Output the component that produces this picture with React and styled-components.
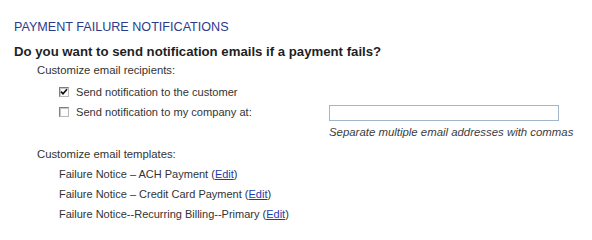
import React from "react";
import styled, { createGlobalStyle } from "styled-components";

const Global = createGlobalStyle`
  html, body { margin: 0; padding: 0; background: #ffffff; }
  body { font-family: Arial, "Liberation Sans", sans-serif; color: #333333; }
`;

const Page = styled.div`
  padding: 17px 0 0 14px;
  width: 592px;
  height: 239px;
  box-sizing: border-box;
  overflow: hidden;
`;

const Title = styled.div`
  font-size: 12.6px;
  line-height: 21px;
  color: #2b3b8a;
  text-transform: uppercase;
`;

const Question = styled.div`
  margin-top: 5px;
  font-size: 13.2px;
  font-weight: bold;
  line-height: 18px;
  color: #1f1f1f;
`;

const Section = styled.div`
  padding-left: 23px;
  margin-top: ${(p) => p.$top || 0}px;
`;

const SectionLabel = styled.div`
  font-size: 11.3px;
  line-height: ${(p) => p.$lh || 20}px;
  color: #333333;
`;

const List = styled.div`
  padding-left: 22px;
  margin-top: ${(p) => p.$top || 0}px;
`;

const OptionGrid = styled.div`
  display: grid;
  grid-template-columns: 270px 230px;
  grid-auto-rows: 20px;
  align-items: center;
`;

const Option = styled.label`
  display: flex;
  align-items: center;
  gap: 7px;
  font-size: 11.1px;
  line-height: 20px;
  color: #333333;
`;

const Box = styled.span`
  width: 10px;
  height: 10px;
  box-sizing: border-box;
  border: 1px solid #7f7f7f;
  border-right-color: #b8b8b8;
  border-bottom-color: #b8b8b8;
  box-shadow: inset 1px 1px 0 #c8c8c8;
  background: #fdfdfd;
  display: inline-flex;
  align-items: center;
  justify-content: center;
`;

const TextField = styled.div`
  width: 230px;
  height: 16px;
  box-sizing: border-box;
  border: 1px solid #a2b6cb;
  background: #ffffff;
  margin-top: 1px;
`;

const Hint = styled.div`
  grid-column: 2 / 3;
  font-size: 11.4px;
  font-style: italic;
  line-height: 21px;
  color: #3c3c3c;
  white-space: nowrap;
`;

const Template = styled.div`
  font-size: 11px;
  line-height: ${(p) => p.$lh || 20}px;
  color: #333333;
  white-space: nowrap;
`;

const Link = styled.a`
  color: #1c3cae;
  text-decoration: underline;
  cursor: pointer;
`;

function CheckBox({ checked }) {
  return (
    <Box>
      {checked && (
        <svg width="8" height="8" viewBox="0 0 8 8">
          <path d="M1 3.6 L3 5.8 L7 1.2" fill="none" stroke="#111" strokeWidth="1.7" />
        </svg>
      )}
    </Box>
  );
}

export default function App() {
  return (
    <>
      <Global />
      <Page>
        <Title>Payment Failure Notifications</Title>
        <Question>Do you want to send notification emails if a payment fails?</Question>
        <Section>
          <SectionLabel $lh={18}>Customize email recipients:</SectionLabel>
          <List $top={3}>
            <Option>
              <CheckBox checked />
              Send notification to the customer
            </Option>
            <OptionGrid>
              <Option>
                <CheckBox />
                Send notification to my company at:
              </Option>
              <TextField />
              <Hint>Separate multiple email addresses with commas</Hint>
            </OptionGrid>
          </List>
        </Section>
        <Section $top={2}>
          <SectionLabel>Customize email templates:</SectionLabel>
          <List>
            <Template>
              Failure Notice – ACH Payment (<Link>Edit</Link>)
            </Template>
            <Template>
              Failure Notice – Credit Card Payment (<Link>Edit</Link>)
            </Template>
            <Template>
              Failure Notice--Recurring Billing--Primary (<Link>Edit</Link>)
            </Template>
          </List>
        </Section>
      </Page>
    </>
  );
}
